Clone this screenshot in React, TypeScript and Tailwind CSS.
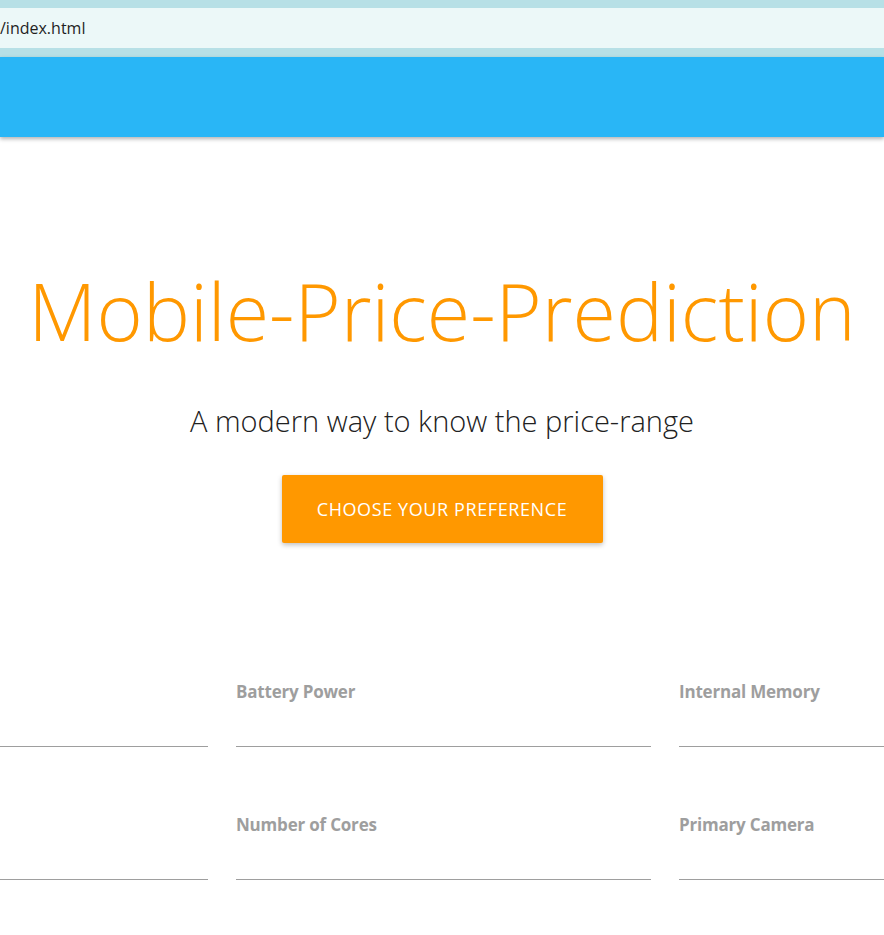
import React from "react";

function Field({ label }: { label: string }) {
  return (
    <div className="flex flex-col">
      <div className="h-[22px] text-[17px] font-bold leading-[22px] text-[#9e9e9e] tracking-[-0.2px]">{label}</div>
      <div className="mt-[43px] h-px bg-[#9e9e9e]" />
    </div>
  );
}

export default function App() {
  return (
    <div className="w-[884px] h-[935px] overflow-hidden bg-white" style={{ fontFamily: '"Open Sans", "Noto Sans", sans-serif' }}>
      <div className="h-[8px] bg-[#b7e0e6]" />
      <div className="h-[40px] bg-[#ecf8f8] flex items-center text-[16px] text-[#1f1f1f]">/index.html</div>
      <div className="h-[9px] bg-[#b7e0e6]" />
      <div className="h-[80px] bg-[#29b6f6] shadow-[0_2px_4px_rgba(0,0,0,0.3)]" />
      <div className="flex flex-col items-center">
        <h1 className="mt-[129px] text-[79px] font-light leading-[90px] text-[#ff9800]">Mobile-Price-Prediction</h1>
        <p className="mt-[45px] text-[29px] font-light leading-[40px] text-[#212121]">A modern way to know the price-range</p>
        <button className="mt-[34px] w-[321px] h-[68px] rounded-[2px] bg-[#ff9800] text-white text-[18px] uppercase tracking-[0.6px] shadow-[0_2px_5px_rgba(0,0,0,0.25)]">
          Choose your preference
        </button>
      </div>
      <div className="mt-[138px] grid grid-cols-[208px_415px_205px] gap-x-[28px] gap-y-[67px]">
        <Field label="" />
        <Field label="Battery Power" />
        <Field label="Internal Memory" />
        <Field label="" />
        <Field label="Number of Cores" />
        <Field label="Primary Camera" />
      </div>
    </div>
  );
}
